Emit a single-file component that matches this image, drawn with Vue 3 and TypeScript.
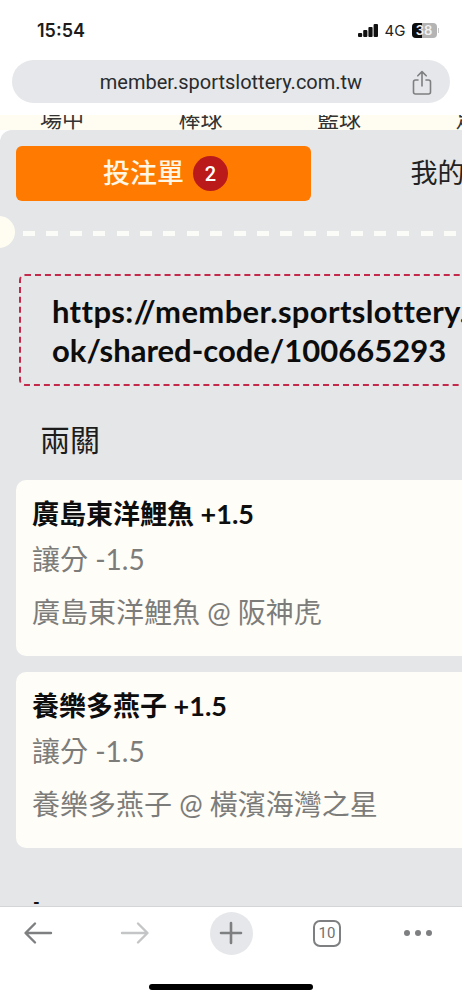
<script setup lang="ts">
const navItems = ["場中", "棒球", "籃球", "足球"];

interface Bet {
  title: string;
  market: string;
  match: string;
}

const bets: Bet[] = [
  { title: "廣島東洋鯉魚 +1.5", market: "讓分 -1.5", match: "廣島東洋鯉魚 @ 阪神虎" },
  { title: "養樂多燕子 +1.5", market: "讓分 -1.5", match: "養樂多燕子 @ 橫濱海灣之星" },
];
</script>

<template>
  <div class="phone">
    <header class="status">
      <span class="time">15:54</span>
      <div class="status-right">
        <svg width="20" height="13" viewBox="0 0 20 13" fill="#111">
          <rect x="0" y="9" width="4.2" height="4" rx="1" />
          <rect x="5.2" y="6" width="4.2" height="7" rx="1" />
          <rect x="10.4" y="3" width="4.2" height="10" rx="1" />
          <rect x="15.6" y="0" width="4.4" height="13" rx="1" />
        </svg>
        <span class="net">4G</span>
        <div class="battery">
          <span class="battery-fill"></span>
          <span class="battery-num">38</span>
        </div>
        <span class="battery-cap"></span>
      </div>
    </header>

    <div class="url-wrap">
      <div class="url-bar">
        <span class="url">member.sportslottery.com.tw</span>
        <svg class="share" width="20" height="26" viewBox="0 0 20 26" fill="none" stroke="#7d7f80" stroke-width="1.6" stroke-linecap="round" stroke-linejoin="round">
          <path d="M6 10H3.5A2 2 0 0 0 1.5 12V22A2 2 0 0 0 3.5 24H16.5A2 2 0 0 0 18.5 22V12A2 2 0 0 0 16.5 10H14" />
          <path d="M10 16V2M5.8 5.8L10 1.6L14.2 5.8" />
        </svg>
      </div>
    </div>

    <nav class="sports">
      <span v-for="item in navItems" :key="item" class="sport">{{ item }}</span>
    </nav>

    <main class="panel">
      <div class="tabs">
        <div class="tab active">
          <span class="tab-label">投注單</span>
          <span class="count">2</span>
        </div>
        <div class="tab"><span class="tab-label">我的投注</span></div>
      </div>

      <div class="divider">
        <span class="notch"></span>
        <span class="dashes"></span>
      </div>

      <div class="share-link">
        <div class="link-first">https://member.sportslottery.com.tw/zh/bo</div>
        <div>ok/shared-code/100665293</div>
      </div>

      <h2 class="group-title">兩關</h2>

      <section v-for="bet in bets" :key="bet.title" class="bet">
        <div class="bet-title">{{ bet.title }}</div>
        <div class="bet-market">{{ bet.market }}</div>
        <div class="bet-match">{{ bet.match }}</div>
      </section>

      <div class="next-title">-</div>
    </main>

    <footer class="toolbar">
      <div class="tools">
        <svg width="30" height="24" viewBox="0 0 30 24" fill="none" stroke="#7d7f80" stroke-width="2.4" stroke-linecap="round" stroke-linejoin="round">
          <path d="M28 12H3M12 2.5L2.5 12L12 21.5" />
        </svg>
        <svg width="30" height="24" viewBox="0 0 30 24" fill="none" stroke="#c4c5c6" stroke-width="2.4" stroke-linecap="round" stroke-linejoin="round">
          <path d="M2 12H27M18 2.5L27.5 12L18 21.5" />
        </svg>
        <div class="plus">
          <svg width="24" height="24" viewBox="0 0 24 24" fill="none" stroke="#7d7f80" stroke-width="2.6" stroke-linecap="round">
            <path d="M12 2V22M2 12H22" />
          </svg>
        </div>
        <div class="tab-count">10</div>
        <div class="more"><i></i><i></i><i></i></div>
      </div>
      <div class="home-bar"></div>
    </footer>
  </div>
</template>

<style>
html,
body {
  margin: 0;
  background: #fff;
}
</style>

<style scoped>
.phone {
  width: 462px;
  height: 1000px;
  overflow: hidden;
  display: flex;
  flex-direction: column;
  background: #fff;
  font-family: Lato, "Noto Sans CJK TC", sans-serif;
  color: #111;
}
.status {
  height: 60px;
  flex: none;
  display: flex;
  justify-content: space-between;
  align-items: center;
  padding: 0 23px 0 37px;
}
.time {
  font-family: Inter, sans-serif;
  font-size: 18px;
  font-weight: 600;
  color: #1c1c1c;
}
.status-right {
  display: flex;
  align-items: center;
}
.net {
  font-family: Inter, sans-serif;
  font-size: 15px;
  margin: 0 6px 0 7px;
  color: #222;
}
.battery {
  position: relative;
  width: 25px;
  height: 15px;
  border-radius: 4px;
  background: #b4b4b4;
  overflow: hidden;
  font-family: Inter, sans-serif;
  font-size: 13px;
  font-weight: 600;
  line-height: 15px;
  text-align: center;
}
.battery-fill {
  position: absolute;
  left: 0;
  top: 0;
  bottom: 0;
  width: 10px;
  background: #0c0c0c;
}
.battery-num {
  position: relative;
  color: #f2f2f2;
}
.battery-cap {
  width: 1.5px;
  height: 5px;
  margin-left: 1px;
  background: #c8c8c8;
}
.url-wrap {
  flex: none;
  height: 55px;
  padding: 0 12px;
}
.url-bar {
  height: 43px;
  border-radius: 22px;
  background: #e5e7ea;
  display: flex;
  align-items: center;
  justify-content: center;
  position: relative;
}
.url {
  font-family: Roboto, sans-serif;
  font-size: 20px;
  color: #2a2b2d;
}
.share {
  position: absolute;
  right: 18px;
  top: 10px;
}
.sports {
  flex: none;
  height: 15px;
  overflow: hidden;
  background: #fffdf2;
  display: flex;
  gap: 94.5px;
  padding-left: 40px;
  white-space: nowrap;
}
.sport {
  flex: none;
  font-size: 22px;
  line-height: 22px;
  margin-top: -7px;
  color: #333;
}
.panel {
  flex: 1;
  min-height: 0;
  overflow: hidden;
  background: #e4e6e8;
  border-radius: 12px 0 0 0;
  padding: 16px 0 0 16px;
  border-bottom: 1px solid #d4d5d6;
}
.tabs {
  display: flex;
  width: 620px;
}
.tab {
  flex: none;
  box-sizing: border-box;
  width: 295px;
  height: 55px;
  border-radius: 6px;
  display: flex;
  align-items: center;
  justify-content: center;
  font-family: "Noto Sans CJK TC", sans-serif;
  font-size: 27px;
  color: #222;
}
.tab + .tab {
  margin-left: 6px;
}
.tab-label {
  margin-bottom: 5px;
}
.tab.active {
  padding-left: 4px;
  background: #ff7a00;
  color: #fff6e4;
  font-weight: 500;
  gap: 9px;
}
.count {
  width: 35px;
  height: 35px;
  border-radius: 50%;
  background: #bb1a1a;
  color: #fff;
  font-family: Roboto, sans-serif;
  font-size: 20px;
  font-weight: 500;
  display: flex;
  align-items: center;
  justify-content: center;
}
.divider {
  position: relative;
  height: 32px;
  margin: 15px 0 0 -16px;
  display: flex;
  align-items: center;
}
.notch {
  position: absolute;
  left: -17px;
  top: 0;
  width: 32px;
  height: 32px;
  border-radius: 50%;
  background: #fffdf2;
}
.dashes {
  display: block;
  width: 100%;
  height: 5px;
  margin: 2px 0 0 23px;
  background: repeating-linear-gradient(90deg, #fbfbf8 0 12px, transparent 12px 23.4px);
}
.share-link {
  width: 560px;
  height: 112px;
  box-sizing: border-box;
  margin: 26px 0 0 3px;
  padding: 16px 0 0 31px;
  border: 2px dashed #c4284a;
  border-radius: 6px;
  font-size: 31px;
  line-height: 39px;
  font-weight: 700;
  white-space: nowrap;
  color: #0c0c0c;
}
.link-first {
  letter-spacing: 0.35px;
}
.group-title {
  margin: 30px 0 0 24px;
  font-family: "Noto Sans CJK TC", sans-serif;
  font-size: 30px;
  line-height: 44px;
  font-weight: 400;
  color: #1c1c1c;
}
.bet {
  width: 560px;
  height: 176px;
  box-sizing: border-box;
  margin: 0 0 16px;
  padding: 15px 0 0 16px;
  border-radius: 10px;
  background: #fffdf7;
}
.group-title + .bet {
  margin-top: 20px;
}
.bet-title {
  font-size: 27px;
  line-height: 38px;
  font-weight: 700;
  color: #0e0e0e;
}
.bet-market,
.bet-match {
  font-size: 28px;
  color: #7c7c7a;
}
.bet-market {
  line-height: 40px;
  margin-top: 6px;
}
.bet-match {
  line-height: 40px;
  margin-top: 13px;
}
.next-title {
  margin: 43px 0 0 17px;
  font-size: 18px;
  line-height: 22px;
  font-weight: 700;
}
.toolbar {
  flex: none;
  height: 93px;
  background: #fff;
  position: relative;
}
.tools {
  height: 52px;
  display: grid;
  grid-template-columns: 88px 106px 86px 106px 76px;
  align-items: center;
  justify-items: center;
  margin-left: -6px;
}
.plus {
  width: 43px;
  height: 43px;
  border-radius: 50%;
  background: #e5e7ea;
  display: flex;
  align-items: center;
  justify-content: center;
}
.tab-count {
  width: 24px;
  height: 23px;
  border: 2.5px solid #7d7f80;
  border-radius: 7px;
  display: flex;
  align-items: center;
  justify-content: center;
  font-family: Roboto, sans-serif;
  font-size: 15px;
  color: #6f7071;
}
.more {
  display: flex;
  gap: 5px;
}
.more i {
  width: 6px;
  height: 6px;
  border-radius: 50%;
  background: #7d7f80;
}
.home-bar {
  position: absolute;
  left: 149px;
  bottom: 10px;
  width: 164px;
  height: 6px;
  border-radius: 3px;
  background: #000;
}
</style>
